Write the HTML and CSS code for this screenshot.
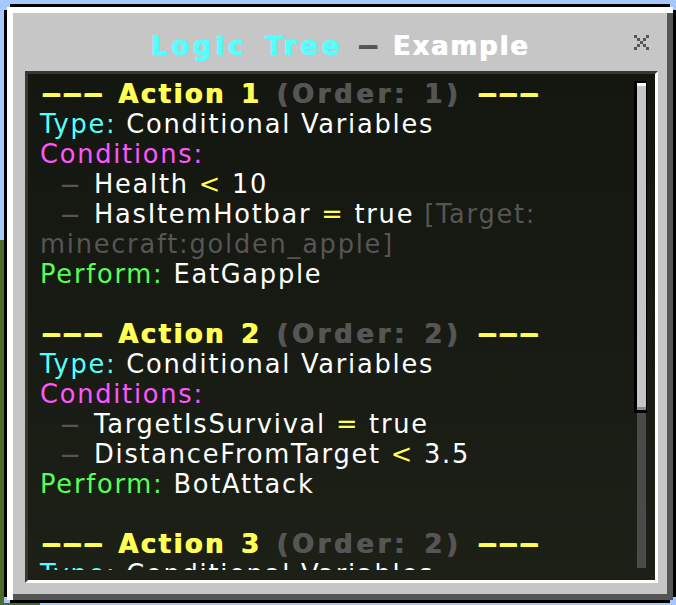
FILE: index.html
```html
<!DOCTYPE html>
<html>
<head>
<meta charset="utf-8">
<title>Logic Tree - Example</title>
<link rel="stylesheet" href="styles.css">
</head>
<body>
<div class="win">
  <div class="titlebar">
    <span class="spacer"></span>
    <h1 class="title"><span class="c t1">Logic Tree</span> <span class="k wd1">-</span> <span class="w t2">Example</span></h1>
    <svg class="close" viewBox="0 0 5 5" shape-rendering="crispEdges" aria-label="Close">
      <rect x="0" y="0" width="1" height="1"/><rect x="4" y="0" width="1" height="1"/>
      <rect x="1" y="1" width="1" height="1"/><rect x="3" y="1" width="1" height="1"/>
      <rect x="2" y="2" width="1" height="1"/>
      <rect x="1" y="3" width="1" height="1"/><rect x="3" y="3" width="1" height="1"/>
      <rect x="0" y="4" width="1" height="1"/><rect x="4" y="4" width="1" height="1"/>
    </svg>
  </div>
  <div class="panel">
    <div class="scroll">
      <div class="line head"><span class="wd3">---</span> Action 1 <span class="order">(Order: 1)</span> <span class="wd3">---</span></div>
      <div class="line"><span class="c">Type:</span> Conditional Variables</div>
      <div class="line m">Conditions:</div>
      <div class="line cond"><span class="bullet">-</span> Health <span class="y">&lt;</span> 10</div>
      <div class="line cond wrap"><span class="bullet">-</span> HasItemHotbar <span class="y">=</span> true <span class="k">[Target:</span> <span class="k">minecraft:golden_apple]</span></div>
      <div class="line"><span class="g">Perform:</span> EatGapple</div>
      <div class="blank"></div>
      <div class="line head"><span class="wd3">---</span> Action 2 <span class="order">(Order: 2)</span> <span class="wd3">---</span></div>
      <div class="line"><span class="c">Type:</span> Conditional Variables</div>
      <div class="line m">Conditions:</div>
      <div class="line cond"><span class="bullet">-</span> TargetIsSurvival <span class="y">=</span> true</div>
      <div class="line cond"><span class="bullet">-</span> DistanceFromTarget <span class="y">&lt;</span> 3.5</div>
      <div class="line"><span class="g">Perform:</span> BotAttack</div>
      <div class="blank"></div>
      <div class="line head"><span class="wd3">---</span> Action 3 <span class="order">(Order: 2)</span> <span class="wd3">---</span></div>
      <div class="line"><span class="c">Type:</span> Conditional Variables</div>
    </div>
    <div class="scrollbar">
      <div class="thumb"></div>
      <div class="track"></div>
    </div>
  </div>
</div>
</body>
</html>
```
FILE: styles.css
```css
html, body {
  margin: 0;
  padding: 0;
}
body {
  width: 676px;
  height: 605px;
  overflow: hidden;
  font-family: "DejaVu Sans", "Liberation Sans", sans-serif;
  background:
    linear-gradient(to bottom, transparent 0 240px, #4d6c2b 240px) left top / 4px 100% no-repeat,
    linear-gradient(to right, #4a6829 0 40px, #a6c8fc 40px) left bottom / 100% 2px no-repeat,
    #a6c8fc;
}
.win {
  box-sizing: border-box;
  margin: 4px 0 0 4px;
  width: 672px;
  height: 599px;
  border: 3px solid #000;
  background: #c6c6c6;
  box-shadow: inset 6px 6px 0 #fff, inset -6px -6px 0 #555;
  padding: 24px 15px 17px 18px;
  display: flex;
  flex-direction: column;
  clip-path: polygon(6px 0, calc(100% - 6px) 0, calc(100% - 6px) 3px, calc(100% - 3px) 3px, calc(100% - 3px) 6px, 100% 6px,
    100% calc(100% - 6px), calc(100% - 3px) calc(100% - 6px), calc(100% - 3px) calc(100% - 3px), calc(100% - 6px) calc(100% - 3px),
    calc(100% - 6px) 100%, 6px 100%, 6px calc(100% - 3px), 3px calc(100% - 3px), 3px calc(100% - 6px), 0 calc(100% - 6px),
    0 6px, 3px 6px, 3px 3px, 6px 3px);
}
.titlebar {
  display: grid;
  grid-template-columns: 1fr auto 1fr;
  height: 30px;
  margin: 0 0 10px -3px;
}
.title {
  margin: 0;
  font-size: 25.7px;
  line-height: 30px;
  font-weight: bold;
  word-spacing: 4.7px;
  white-space: nowrap;
  text-shadow: 1px 0 0 currentColor;
}
.t1 { letter-spacing: 4px; }
.t2 { letter-spacing: 2px; }
.close {
  justify-self: end;
  width: 15px;
  height: 15px;
  margin: 4px 9px 0 0;
  fill: #555555;
}
.panel {
  flex: 1;
  box-sizing: border-box;
  border: 3px solid;
  border-color: #373737 #ffffff #ffffff #373737;
  background: linear-gradient(to bottom, #14170f 0, #171a12 40%, #1c2017 100%);
  display: flex;
  align-items: flex-start;
}
.scroll {
  flex: 1;
  box-sizing: border-box;
  height: 496px;
  overflow: hidden;
  padding: 5px 0 0 12px;
  color: #ffffff;
  font-size: 25.7px;
  line-height: 30px;
  letter-spacing: 1.75px;
}
.line {
  white-space: nowrap;
}
.line.wrap {
  white-space: normal;
}
.blank {
  height: 30px;
}
.head {
  font-weight: bold;
  color: #ffff55;
  letter-spacing: 2.6px;
  word-spacing: 3.45px;
  text-shadow: 1px 0 0 currentColor;
}
.order {
  color: #555555;
  letter-spacing: 3.8px;
}
.wd3 {
  display: inline-block;
  letter-spacing: 0;
  transform: scaleX(1.96);
  transform-origin: 0 50%;
  margin-right: 31px;
}
.wd1 {
  display: inline-block;
  letter-spacing: 0;
  transform: scaleX(2.1);
  transform-origin: 0 50%;
  margin-right: 11.8px;
}
.cond {
  text-indent: 19.4px;
}
.bullet {
  display: inline-block;
  text-indent: 0;
  letter-spacing: 0;
  color: #555555;
  transform: scaleX(2.4);
  transform-origin: 0 50%;
  margin-right: 15.4px;
}
.scrollbar {
  width: 13px;
  height: 487px;
  margin: 7px 8px 0 0;
  display: flex;
  flex-direction: column;
}
.thumb {
  box-sizing: border-box;
  height: 332px;
  border-style: solid;
  border-color: #000;
  border-width: 2px 1px 3px 3px;
  background: #c6c6c6;
  box-shadow: inset 0 3px 0 #ffffff, inset 0 -3px 0 #8b8b8b;
}
.track {
  flex: 1;
  margin: 0 1px 0 3px;
  background: #4a4a4a;
}
.y { color: #ffff55; }
.c { color: #55ffff; }
.m { color: #ff55ff; }
.g { color: #55ff55; }
.w { color: #ffffff; }
.k { color: #555555; }
```
